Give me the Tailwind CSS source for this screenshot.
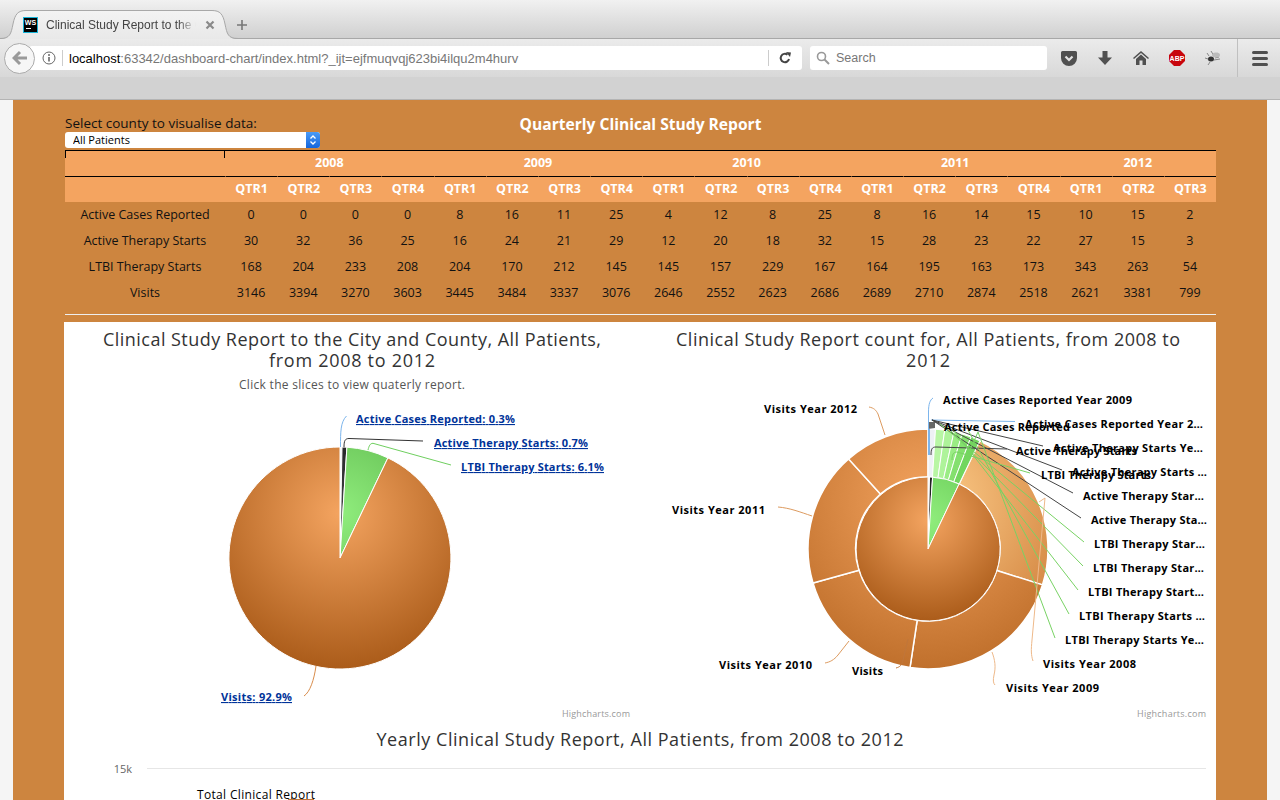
<!DOCTYPE html>
<html lang="en">
<head>
<meta charset="UTF-8">
<title>Clinical Study Report to the City and County</title>
<script src="https://cdn.jsdelivr.net/npm/@tailwindcss/browser@4"></script>
</head>
<body class="h-[800px] overflow-hidden bg-[#f5f5f5] font-['Open_Sans',sans-serif]">

<!-- browser chrome -->
<div class="h-[100px] border-b border-[#b4b4b4] bg-[#d2d2d2] font-['Liberation_Sans',sans-serif]">
  <!-- tab strip -->
  <div class="relative flex h-[39px] items-end border-b border-[#a8a8a8] bg-gradient-to-b from-[#f1f1f1] to-[#d0d0d0] pl-[10px]">
    <svg class="absolute left-0 top-[10px]" width="240" height="30" viewBox="0 0 240 30">
      <defs><linearGradient id="tabg" x1="0" y1="0" x2="0" y2="1"><stop offset="0" stop-color="#f3f3f3"/><stop offset="1" stop-color="#e8e8e8"/></linearGradient></defs>
      <path d="M0 29 C10 29 11 24 13 14 C15 4 18 1 26 1 L212 1 C220 1 223 4 225 14 C227 24 228 29 238 29 L238 30 L0 30 Z" fill="url(#tabg)"/>
      <path d="M0 28.500 C10 28.500 11 24 13 14 C15 4 18 .5 26 .5 L212 .5 C220 .5 223 4 225 14 C227 24 228 28.500 238 28.500" fill="none" stroke="#a8a8a8"/>
    </svg>
    <div class="relative mb-[5px] ml-[13px] flex h-[16px] w-[15px] flex-col items-center border border-[#18b4d8] bg-black text-[7px] font-bold leading-[9px] text-white">WS<span class="mt-[1px] ml-[2px] h-px w-[5px] self-start bg-white"></span></div>
    <div class="relative mb-[5px] ml-[8px] w-[150px] overflow-hidden whitespace-nowrap text-[12px] leading-[16px] text-[#444] [mask-image:linear-gradient(to_right,black_88%,transparent)]">Clinical Study Report to the City</div>
    <svg class="relative mb-[8px] ml-[9px]" width="10" height="10" viewBox="0 0 10 10"><path d="M1.500 1.500 L8.500 8.500 M8.500 1.500 L1.500 8.500" stroke="#8a8a8a" stroke-width="2.200"/></svg>
    <svg class="relative mb-[7px] ml-[21px]" width="12" height="12" viewBox="0 0 12 12"><path d="M6 1 V11 M1 6 H11" stroke="#777" stroke-width="1.600"/></svg>
  </div>
  <!-- nav bar -->
  <div class="relative flex h-[38px] items-center bg-gradient-to-b from-[#ebebeb] to-[#d8d8d8] pl-[4px]">
    <div class="relative z-10 flex size-[31px] items-center justify-center rounded-full border border-[#ababab] bg-[#f6f6f6]">
      <svg width="16" height="16" viewBox="0 0 16 16"><path d="M8 2 L2 8 L8 14 M2.500 8 H15" fill="none" stroke="#9a9a9a" stroke-width="3"/></svg>
    </div>
    <div class="-ml-[6px] flex h-[24px] w-[773px] items-center rounded-[3px] bg-white pl-[11px]">
      <svg class="ml-[2px]" width="14" height="14" viewBox="0 0 14 14"><circle cx="7" cy="7" r="6" fill="none" stroke="#666" stroke-width="1"/><circle cx="7" cy="4" r="1" fill="#666"/><path d="M7 6 V10.500" stroke="#666" stroke-width="1.600"/></svg>
      <span class="ml-[6px] h-[16px] w-px bg-[#ccc]"></span>
      <span class="ml-[6px] w-[699px] whitespace-nowrap pt-px text-[13px] text-[#777]"><span class="text-black">localhost</span>:63342/dashboard-chart/index.html?_ijt=ejfmuqvqj623bi4ilqu2m4hurv</span>
      <span class="h-[16px] w-px bg-[#ccc]"></span>
      <svg class="ml-[10px]" width="12" height="12" viewBox="0 0 12 12"><path d="M10 7 A4.200 4.200 0 1 1 8.500 2.700" fill="none" stroke="#444" stroke-width="2"/><path d="M7 0 L12 0.500 L11 5 Z" fill="#444"/></svg>
    </div>
    <div class="ml-[8px] flex h-[24px] w-[237px] items-center rounded-[3px] bg-white pl-[6px]">
      <svg width="14" height="14" viewBox="0 0 14 14"><circle cx="5.500" cy="5.500" r="4" fill="none" stroke="#999" stroke-width="1.600"/><path d="M8.500 8.500 L13 13" stroke="#999" stroke-width="2"/></svg>
      <span class="ml-[6px] pt-px text-[12.500px] text-[#777]">Search</span>
    </div>
    <div class="ml-[4px] flex w-[36px] justify-center">
      <svg width="16" height="15" viewBox="0 0 16 15"><path d="M1.500 0 H14.500 A1.500 1.500 0 0 1 16 1.500 V7 A8 8 0 0 1 0 7 V1.500 A1.500 1.500 0 0 1 1.500 0 Z" fill="#505050"/><path d="M4.500 5.500 L8 9 L11.500 5.500" fill="none" stroke="#e4e4e4" stroke-width="2.200"/></svg>
    </div>
    <div class="flex w-[36px] justify-center">
      <svg width="14" height="14" viewBox="0 0 14 14"><path d="M4.500 0 H9.500 V6.500 H14 L7 14 L0 6.500 H4.500 Z" fill="#505050"/></svg>
    </div>
    <div class="flex w-[36px] justify-center">
      <svg width="16" height="14" viewBox="0 0 16 14"><path d="M8 0 L16 7 L15 8 L8 2 L1 8 L0 7 Z M3 8 L8 3.500 L13 8 V14 H9.500 V9.500 H6.500 V14 H3 Z" fill="#505050"/></svg>
    </div>
    <div class="flex w-[36px] justify-center">
      <svg width="16" height="16" viewBox="0 0 16 16"><path d="M5 0 H11 L16 5 V11 L11 16 H5 L0 11 V5 Z" fill="#c8050c"/><text x="8" y="10.500" text-anchor="middle" font-family="Liberation Sans" font-size="7" font-weight="700" fill="#fff">ABP</text></svg>
    </div>
    <div class="flex w-[36px] justify-center">
      <svg width="16" height="14" viewBox="0 0 16 14"><ellipse cx="6" cy="8" rx="3" ry="2.500" fill="#333"/><path d="M8 6 L13 2 M4 5 L2 2 M3 8 L0 7 M5 11 L3 14 M9 9 L15 8 M9 5 L6 0 M10 7 L14 6" stroke="#888" stroke-width="1"/><ellipse cx="11" cy="4" rx="4" ry="2.500" fill="#bbb"/></svg>
    </div>
    <span class="ml-[6px] h-[38px] w-px bg-[#c0c0c0]"></span>
    <div class="ml-[14px] flex w-[16px] flex-col gap-[3px]">
      <span class="h-[3px] rounded-full bg-[#505050]"></span>
      <span class="h-[3px] rounded-full bg-[#505050]"></span>
      <span class="h-[3px] rounded-full bg-[#505050]"></span>
    </div>
  </div>
</div>

<!-- page -->
<div class="ml-[13px] w-[1254px] bg-[#cd853f] pl-[51px] pr-[51px] pt-[15px]">
  <div class="ml-px grid grid-cols-[255px_1fr_255px]">
    <div>
      <label class="block text-[13.500px] leading-[17px] text-[#111]">Select county to visualise data:</label>
      <div class="relative h-[16px] w-[255px]">
        <select class="block h-[16px] w-full appearance-none rounded-[3px] bg-white pl-[8px] text-[11px] leading-[16px] text-black"><option>All Patients</option></select>
        <div class="absolute right-0 top-0 flex h-[16px] w-[14px] items-center justify-center rounded-r-[3px] bg-gradient-to-b from-[#4a9bf7] to-[#1465dc]">
          <svg width="8" height="12" viewBox="0 0 8 12"><path d="M1.500 4.500 L4 2 L6.500 4.500 M1.500 7.500 L4 10 L6.500 7.500" fill="none" stroke="#fff" stroke-width="1.300"/></svg>
        </div>
      </div>
    </div>
    <div class="text-center text-[15.600px] font-bold leading-[18px] text-white">Quarterly Clinical Study Report</div>
    <div></div>
  </div>

  <table class="ml-px mt-[2px] w-[1151px] table-fixed border-separate border-spacing-0 text-center text-[12.500px]">
    <colgroup><col class="w-[160px]"></colgroup>
    <thead class="bg-[#f4a460] font-bold text-white">
      <tr class="h-[26px]">
        <th class="relative border-t border-black"><span class="absolute left-0 top-0 h-[7px] w-px bg-black"></span><span class="absolute right-0 top-0 h-[7px] w-px bg-black"></span></th>
        <th colspan="4" class="border-t border-black">2008</th>
        <th colspan="4" class="border-t border-black">2009</th>
        <th colspan="4" class="border-t border-black">2010</th>
        <th colspan="4" class="border-t border-black">2011</th>
        <th colspan="3" class="border-t border-black">2012</th>
      </tr>
      <tr class="h-[26px]">
        <th class="border-t border-black"></th>
        <th class="border-t border-l border-t-black border-l-[#f4a460]">QTR1</th><th class="border-t border-l border-t-black border-l-[#f4a460]">QTR2</th><th class="border-t border-l border-t-black border-l-[#f4a460]">QTR3</th><th class="border-t border-l border-t-black border-l-[#f4a460]">QTR4</th>
        <th class="border-t border-l border-t-black border-l-[#f4a460]">QTR1</th><th class="border-t border-l border-t-black border-l-[#f4a460]">QTR2</th><th class="border-t border-l border-t-black border-l-[#f4a460]">QTR3</th><th class="border-t border-l border-t-black border-l-[#f4a460]">QTR4</th>
        <th class="border-t border-l border-t-black border-l-[#f4a460]">QTR1</th><th class="border-t border-l border-t-black border-l-[#f4a460]">QTR2</th><th class="border-t border-l border-t-black border-l-[#f4a460]">QTR3</th><th class="border-t border-l border-t-black border-l-[#f4a460]">QTR4</th>
        <th class="border-t border-l border-t-black border-l-[#f4a460]">QTR1</th><th class="border-t border-l border-t-black border-l-[#f4a460]">QTR2</th><th class="border-t border-l border-t-black border-l-[#f4a460]">QTR3</th><th class="border-t border-l border-t-black border-l-[#f4a460]">QTR4</th>
        <th class="border-t border-l border-t-black border-l-[#f4a460]">QTR1</th><th class="border-t border-l border-t-black border-l-[#f4a460]">QTR2</th><th class="border-t border-l border-t-black border-l-[#f4a460]">QTR3</th>
      </tr>
    </thead>
    <tbody class="text-[#111]">
      <tr class="h-[26px]"><td>Active Cases Reported</td><td>0</td><td>0</td><td>0</td><td>0</td><td>8</td><td>16</td><td>11</td><td>25</td><td>4</td><td>12</td><td>8</td><td>25</td><td>8</td><td>16</td><td>14</td><td>15</td><td>10</td><td>15</td><td>2</td></tr>
      <tr class="h-[26px]"><td>Active Therapy Starts</td><td>30</td><td>32</td><td>36</td><td>25</td><td>16</td><td>24</td><td>21</td><td>29</td><td>12</td><td>20</td><td>18</td><td>32</td><td>15</td><td>28</td><td>23</td><td>22</td><td>27</td><td>15</td><td>3</td></tr>
      <tr class="h-[26px]"><td>LTBI Therapy Starts</td><td>168</td><td>204</td><td>233</td><td>208</td><td>204</td><td>170</td><td>212</td><td>145</td><td>145</td><td>157</td><td>229</td><td>167</td><td>164</td><td>195</td><td>163</td><td>173</td><td>343</td><td>263</td><td>54</td></tr>
      <tr class="h-[26px]"><td>Visits</td><td>3146</td><td>3394</td><td>3270</td><td>3603</td><td>3445</td><td>3484</td><td>3337</td><td>3076</td><td>2646</td><td>2552</td><td>2623</td><td>2686</td><td>2689</td><td>2710</td><td>2874</td><td>2518</td><td>2621</td><td>3381</td><td>799</td></tr>
    </tbody>
  </table>
  <hr class="ml-px mt-[8px] w-[1151px] border-0 border-t border-[#eee]">

  <!-- charts panel -->
  <div class="mt-[7px] h-[478px] w-[1152px] overflow-hidden bg-white">
    <div class="flex">
      <!-- share of patients pie -->
      <svg class="block shrink-0" width="576" height="400" viewBox="64 322 576 400">
        <defs>
          <radialGradient id="p1o" gradientUnits="userSpaceOnUse" cx="340" cy="513" r="155"><stop offset="0" stop-color="#f4a460"/><stop offset="1" stop-color="#ab5c1a"/></radialGradient>
          <radialGradient id="p1g" gradientUnits="userSpaceOnUse" cx="340" cy="513" r="155"><stop offset="0" stop-color="#90ed7d"/><stop offset="1" stop-color="#4fa83f"/></radialGradient>
          <radialGradient id="p1k" gradientUnits="userSpaceOnUse" cx="340" cy="513" r="155"><stop offset="0" stop-color="#434348"/><stop offset="1" stop-color="#000"/></radialGradient>
        </defs>
        <g font-size="18" fill="#333" text-anchor="middle">
          <text x="352" y="346" textLength="498">Clinical Study Report to the City and County, All Patients,</text>
          <text x="352" y="367" textLength="166">from 2008 to 2012</text>
        </g>
        <text x="352" y="389" text-anchor="middle" font-size="12" fill="#555" textLength="226">Click the slices to view quaterly report.</text>
        <path d="M340 558 L340 447 A111 111 0 0 1 342 447 Z" fill="#dfe9f3" stroke="#fff" stroke-width="1"/>
        <path d="M340 558 L342 447 A111 111 0 0 1 346.900 447.200 Z" fill="url(#p1k)" stroke="#fff" stroke-width="1"/>
        <path d="M340 558 L346.900 447.200 A111 111 0 0 1 387.900 457.900 Z" fill="url(#p1g)" stroke="#fff" stroke-width="1"/>
        <path d="M340 558 L387.900 457.900 A111 111 0 1 1 340 447 Z" fill="url(#p1o)" stroke="#fff" stroke-width="1"/>
        <g fill="none">
          <path d="M340.500 447 C340.500 432 340.500 422 346.500 416" stroke="#7cb5ec"/>
          <path d="M344 447 C344 441 345 438.500 349 438.500 L423 441" stroke="#333"/>
          <path d="M368 450 C369 446 370 443.300 373 443.300 L451 465" stroke="#6fcf5f"/>
          <path d="M316 666 C314 680 310 692 304 696" stroke="#d98d4c"/>
        </g>
        <g font-size="11" font-weight="700" fill="#003399" text-decoration="underline">
          <text x="356" y="423" textLength="159">Active Cases Reported: 0.3%</text>
          <text x="434" y="447" textLength="154">Active Therapy Starts: 0.7%</text>
          <text x="461" y="471" textLength="143">LTBI Therapy Starts: 6.1%</text>
          <text x="221" y="701" textLength="71">Visits: 92.9%</text>
        </g>
        <text x="562" y="717" font-size="9" fill="#999" textLength="68">Highcharts.com</text>
      </svg>

      <!-- count by year donut -->
      <svg class="block shrink-0" width="576" height="400" viewBox="640 322 576 400">
        <defs>
          <radialGradient id="p2i" gradientUnits="userSpaceOnUse" cx="928" cy="520" r="101"><stop offset="0" stop-color="#f4a460"/><stop offset="1" stop-color="#ab5c1a"/></radialGradient>
          <radialGradient id="p2ig" gradientUnits="userSpaceOnUse" cx="928" cy="520" r="101"><stop offset="0" stop-color="#90ed7d"/><stop offset="1" stop-color="#5cc04a"/></radialGradient>
          <radialGradient id="p2o" gradientUnits="userSpaceOnUse" cx="928" cy="501" r="168"><stop offset="0" stop-color="#f4a460"/><stop offset="1" stop-color="#c0702c"/></radialGradient>
          <radialGradient id="p2l" gradientUnits="userSpaceOnUse" cx="928" cy="501" r="168"><stop offset="0" stop-color="#ffcf8c"/><stop offset="1" stop-color="#cf7f3a"/></radialGradient>
        </defs>
        <g font-size="18" fill="#333" text-anchor="middle">
          <text x="928" y="346" textLength="504">Clinical Study Report count for, All Patients, from 2008 to</text>
          <text x="928" y="367" textLength="44">2012</text>
        </g>
        <!-- outer ring -->
        <g stroke="#fff" stroke-width="1.500">
          <path d="M979.800 440.800 A120 120 0 0 1 1042.500 584.900 L996.700 570.500 A72 72 0 0 0 959.100 484 Z" fill="url(#p2l)"/>
          <path d="M1042.500 584.900 A120 120 0 0 1 910 667.600 L917.200 620.200 A72 72 0 0 0 996.700 570.500 Z" fill="url(#p2o)"/>
          <path d="M910 667.600 A120 120 0 0 1 813 583 L859 570.200 A72 72 0 0 0 917.200 620.200 Z" fill="url(#p2o)"/>
          <path d="M813 583 A120 120 0 0 1 848.600 458.900 L880.400 494 A72 72 0 0 0 859 570.200 Z" fill="url(#p2o)"/>
          <path d="M848.600 458.900 A120 120 0 0 1 928 429 L928 477 A72 72 0 0 0 880.400 494 Z" fill="url(#p2o)"/>
        </g>
        <g stroke="#fff" stroke-width="1">
          <path d="M928 429 L935.500 429.200 L932.500 477.100 L928 477 Z" fill="#eef1f5"/>
          <path d="M935.500 429.200 L944.700 430.200 L938 477.700 L932.500 477.100 Z" fill="#b8f6a4"/>
          <path d="M944.700 430.200 L954 431.800 L943.600 478.700 L938 477.700 Z" fill="#aef39a"/>
          <path d="M954 431.800 L962.100 434 L948.400 480 L943.600 478.700 Z" fill="#9aec84"/>
          <path d="M962.100 434 L971 437 L953.800 481.800 L948.400 480 Z" fill="#84e06e"/>
          <path d="M971 437 L979.800 440.800 L959.100 484 L953.800 481.800 Z" fill="#72d65e"/>
        </g>
        <path d="M928 422 H935 V428 L928 429 Z" fill="#666"/>
        <path d="M929 429 V455" stroke="#7cb5ec" stroke-width="2"/>
        <!-- inner pie -->
        <g stroke="#fff" stroke-width="1">
          <path d="M928 549 L928 477 A72 72 0 0 1 929.500 477 Z" fill="#dfe9f3"/>
          <path d="M928 549 L929.500 477 L932.600 477.200 Z" fill="#222"/>
          <path d="M928 549 L932.600 477.200 A72 72 0 0 1 959.100 484 Z" fill="url(#p2ig)"/>
          <path d="M928 549 L959.100 484 A72 72 0 1 1 928 477 Z" fill="url(#p2i)"/>
        </g>
        <!-- connectors -->
        <g fill="none" stroke-width="1">
          <path d="M928.500 429 L928.500 412 C928.500 404 930 400 933 398" stroke="#7cb5ec"/>
          <path d="M931 420 L1015 421.500" stroke="#7cb5ec"/>
          <g stroke="#444">
            <path d="M931 455 C931 449 932 447 936 447 L1007 449"/>
            <path d="M932 420 L1043 446"/>
            <path d="M932 420 L1062 470"/>
            <path d="M932 420 L1073 493"/>
            <path d="M932 420 L1081 518"/>
          </g>
          <g stroke="#78d264">
            <path d="M952 460 C952 455 953 452 957 452 L1030 473"/>
            <path d="M940 424 L1084 542"/>
            <path d="M946 426 L1083 566"/>
            <path d="M952 428 L1078 590"/>
            <path d="M968 430 L1069 614"/>
            <path d="M978 432 L1055 638"/>
            <path d="M978 432 L970 450"/>
          </g>
          <g stroke="#eeb98a">
            <path d="M1033 661 C1031 655 1031 650 1032 640 L1045 498 L1039 502"/>
            <path d="M995 685 C993 683 993 680 994 675 C996 667 995 660 992 652"/>
          </g>
          <g stroke="#dd9b60">
            <path d="M869 407 C874 408 876 410 878 414 L885 435"/>
            <path d="M778 507 C790 508 800 512 812 516"/>
            <path d="M825 663 C830 662 834 660 838 655 L849 641"/>
            <path d="M896 668 C900 667 902 665 903 660 L908 639" stroke="#c0763a"/>
          </g>
        </g>
        <g font-size="11" font-weight="700" fill="#000">
          <text x="943" y="404" textLength="189">Active Cases Reported Year 2009</text>
          <text x="944" y="431" textLength="126">Active Cases Reported</text>
          <text x="1016" y="455" textLength="121">Active Therapy Starts</text>
          <text x="1041" y="479" textLength="110">LTBI Therapy Starts</text>
          <text x="1025" y="428" textLength="178">Active Cases Reported Year 2…</text>
          <text x="1053" y="452" textLength="150">Active Therapy Starts Ye…</text>
          <text x="1072" y="476" textLength="135">Active Therapy Starts …</text>
          <text x="1083" y="500" textLength="121">Active Therapy Star…</text>
          <text x="1091" y="524" textLength="116">Active Therapy Sta…</text>
          <text x="1094" y="548" textLength="111">LTBI Therapy Star…</text>
          <text x="1093" y="572" textLength="111">LTBI Therapy Star…</text>
          <text x="1088" y="596" textLength="116">LTBI Therapy Start…</text>
          <text x="1079" y="620" textLength="126">LTBI Therapy Starts …</text>
          <text x="1065" y="644" textLength="139">LTBI Therapy Starts Ye…</text>
          <text x="1043" y="668" textLength="93">Visits Year 2008</text>
          <text x="1006" y="692" textLength="93">Visits Year 2009</text>
          <text x="764" y="413" textLength="93">Visits Year 2012</text>
          <text x="672" y="514" textLength="93">Visits Year 2011</text>
          <text x="719" y="669" textLength="93">Visits Year 2010</text>
          <text x="852" y="675" textLength="31">Visits</text>
        </g>
        <text x="1137" y="717" font-size="9" fill="#999" textLength="69">Highcharts.com</text>
      </svg>
    </div>

    <!-- yearly chart, cut off by the window -->
    <svg class="block" width="1152" height="78" viewBox="64 722 1152 78">
      <text x="640" y="746" text-anchor="middle" font-size="18" fill="#333" textLength="527">Yearly Clinical Study Report, All Patients, from 2008 to 2012</text>
      <path d="M147 768.500 H1206" stroke="#e6e6e6"/>
      <text x="132" y="773" text-anchor="end" font-size="11" fill="#666">15k</text>
      <text x="197" y="799" font-size="12" fill="#000" textLength="118">Total Clinical Report</text>
      <path d="M288 799.500 H314" stroke="#c0763a"/>
    </svg>
  </div>
</div>
</body>
</html>
